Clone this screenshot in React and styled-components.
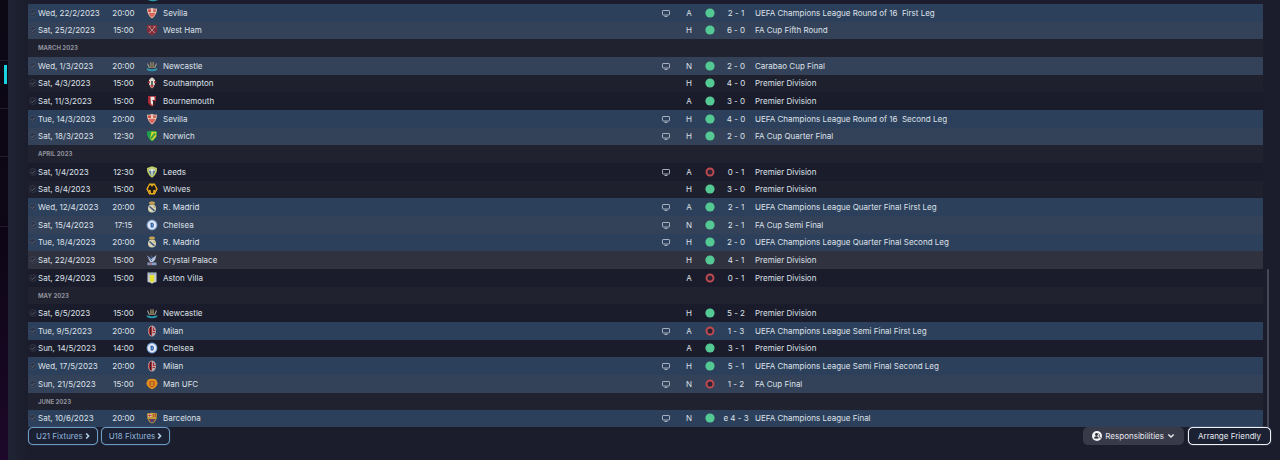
import React from "react";
import styled, { createGlobalStyle } from "styled-components";

const GlobalStyle = createGlobalStyle`
  *, *::before, *::after { box-sizing: border-box; }
  body {
    margin: 0;
    background: #1b1d2c;
    color: #dde1e9;
    font-family: Inter, "Liberation Sans", sans-serif;
    font-size: 8px;
    line-height: 12px;
  }
`;

const Page = styled.div`
  display: flex;
  min-height: 100vh;
`;

const Sidebar = styled.nav`
  flex: 0 0 8px;
  background: linear-gradient(#0c0814, #0e0616 55%, #1d0829);
`;

const SidebarItem = styled.div`
  height: ${(p) => p.$height}px;
  padding-top: 4px;
  border-bottom: 1px solid #241c2e;
`;

const ActiveMark = styled.div`
  width: 3px;
  height: 19px;
  margin-left: 4px;
  background: #19d3e2;
`;

const Panel = styled.main`
  flex: 1;
  min-width: 0;
  padding: 0 9px 15px 20px;
  background: linear-gradient(90deg, #1f2434, #1b1d2c 20px);
`;

const ScrollArea = styled.div`
  display: flex;
  justify-content: space-between;
`;

const Fixtures = styled.div`
  flex: 1;
  min-width: 0;
  margin-right: 4px;
`;

const PreviousRow = styled.div`
  display: flex;
  align-items: flex-end;
  height: 4px;
  padding: 0 0 2px 119px;
  overflow: hidden;
`;

const ScrollTrack = styled.div`
  display: flex;
  flex-direction: column;
  justify-content: flex-end;
  flex: 0 0 2px;
  margin-right: 2px;
`;

const ScrollThumb = styled.div`
  height: 37%;
  border-radius: 1px;
  background: #454757;
`;

const Table = styled.table`
  width: 100%;
  table-layout: fixed;
  border-collapse: collapse;
`;

const rowColors = {
  league: "#1b1c2b",
  leagueAlt: "#1f202e",
  month: "#20222f",
  europe: "#2d405b",
  cup: "#344259",
  hover: "#31323f",
};

const Row = styled.tr`
  height: 18px;
  background: ${(p) => rowColors[p.$tone]};
  &:nth-child(3n + 2), &:last-child { height: 17px; }
`;

const Cell = styled.td`
  padding: 0 0 1px;
  line-height: 12px;
  text-align: ${(p) => p.$align || "left"};
  vertical-align: middle;
  white-space: pre;
  svg { display: block; margin: 0 auto; }
`;

const CrestCell = styled(Cell)`
  padding-left: 4px;
`;

const MonthCell = styled.th`
  padding: 0 0 0 10px;
  color: #8f919b;
  font-size: 6px;
  font-weight: 700;
  line-height: 12px;
  text-align: left;
`;

const Footer = styled.footer`
  display: flex;
  justify-content: space-between;
`;

const ButtonGroup = styled.div`
  display: flex;
  gap: ${(p) => p.$gap}px;
`;

const Button = styled.button`
  display: flex;
  align-items: center;
  justify-content: center;
  gap: ${(p) => (p.$compact ? 2 : 3)}px;
  height: 18px;
  padding: 0 ${(p) => (p.$compact ? 7 : 8)}px 1px;
  border: 1px solid ${(p) => p.$border || "transparent"};
  border-radius: 5px;
  background: ${(p) => p.$fill || "#1b2133"};
  color: ${(p) => p.$color || "#e6e8ee"};
  font: inherit;
  white-space: nowrap;
  box-shadow: ${(p) => (p.$border ? `0 0 1px ${p.$border}` : "none")};
`;

const WideButton = styled(Button)`
  padding: 0 9px 1px;
`;

const crests = {
  Sevilla: (
    <>
      <path d="M1 1.500Q3.500 2 6 .8Q8.500 2 11 1.500Q11 8 6 11.500Q1 8 1 1.500Z" fill="#e3b9aa" />
      <path d="M2 2.500H5V5H2.300Z" fill="#cf4b45" />
      <path d="M7 2.500H10L9.700 5H7Z" fill="#c96a5c" />
      <path d="M2.700 6H9.300L8 8.800L6 10.500L4 8.800Z" fill="#d8655b" />
      <path d="M6 2.500V5" stroke="#f0ded8" />
    </>
  ),
  "West Ham": (
    <>
      <path d="M1 1H11V7.500Q9.500 10.500 6 11.500Q2.500 10.500 1 7.500Z" fill="#812f3d" />
      <path d="M3.200 3L8.800 9M8.800 3L3.200 9" stroke="#b98e84" strokeWidth="1" />
      <path d="M2.500 2.700H4.700M7.300 2.700H9.500" stroke="#bb7a74" strokeWidth="1.300" />
    </>
  ),
  Newcastle: (
    <>
      <path d="M1.500 3.500L3.500 8M10.500 3.500L8.500 8" stroke="#9a968a" strokeWidth="1.200" />
      <path d="M4.300 3.500H7.700V8H4.300Z" fill="#504c49" />
      <path d="M4.900 2V8M7.100 2V8" stroke="#b39d69" strokeWidth=".9" />
      <path d="M.5 8.300Q6 10.500 11.500 8.300L10.700 10.300Q6 12.300 1.300 10.300Z" fill="#2d9db2" />
    </>
  ),
  Southampton: (
    <>
      <path d="M3 2.500H9V7Q8 10 6 11.500Q4 10 3 7Z" fill="#e8e4df" />
      <circle cx="6" cy="2.500" r="2" fill="#dbd5c8" />
      <path d="M1 5L4 4V6.500ZM11 5L8 4V6.500ZM4 8L6 11.300L8 8Z" fill="#c23a3c" />
      <path d="M6 4V8" stroke="#47664f" strokeWidth="1.800" />
    </>
  ),
  Bournemouth: (
    <>
      <path d="M2 1H10V7.500Q9 10.500 6 11.500Q3 10.500 2 7.500Z" fill="#a92932" />
      <path d="M4.500 1.800H8.500V5H6L7.500 7L6.300 10.800L4.800 8Z" fill="#ece8e4" />
      <path d="M7 5.500L9.700 6V8.500L7.300 10.500Z" fill="#222127" />
    </>
  ),
  Norwich: (
    <>
      <path d="M1 1.500Q6 .2 11 1.500Q11.500 8 6 11.500Q.5 8 1 1.500Z" fill="#1f9f4b" />
      <path d="M5.500 1.800H10.200V6.500Q8 9.500 6 10.500L4 8Z" fill="#d0d22f" />
      <path d="M5 8.500L9 3.500" stroke="#2a9a4a" strokeWidth="1.900" />
    </>
  ),
  Leeds: (
    <>
      <path d="M1 2L6 .3L11 2Q11.500 8 6 11.700Q.5 8 1 2Z" fill="#c3cf63" />
      <path d="M2.700 3H9.300Q9.300 7.500 6 10Q2.700 7.500 2.700 3Z" fill="#567f93" />
      <path d="M3.200 4H8.800M6 3V9.300" stroke="#eef0e2" strokeWidth="1.300" />
    </>
  ),
  Wolves: (
    <>
      <path d="M3.200 .6H8.800L11.700 6L8.800 11.400H3.200L.3 6Z" fill="#eeb01e" />
      <path d="M3.900 2H8.100L10.200 6L8.100 10H3.900L1.800 6Z" fill="#1f1a17" />
      <path d="M4.500 2H7.500L6 4ZM2.200 6.500L4.700 7.200L5 9.900H3.900ZM9.800 6.500L7.300 7.200L7 9.900H8.100Z" fill="#eeb01e" />
    </>
  ),
  "R. Madrid": (
    <>
      <circle cx="6" cy="7.500" r="4" fill="#d9d5b4" />
      <path d="M3.500 3.500L3 1.300L6 .3L9 1.300L8.500 3.500Z" fill="#c3a052" />
      <path d="M3.500 5.500L8.500 9.800" stroke="#455a80" strokeWidth="1.600" />
      <path d="M7.500 5L9 7" stroke="#c5a24e" />
    </>
  ),
  Chelsea: (
    <>
      <circle cx="6" cy="6" r="5.400" fill="#7ea2d6" />
      <circle cx="6" cy="6" r="4.300" fill="#e3eaf5" />
      <path d="M4.400 3.700H7L7.900 5.500L7.300 8.500H4.800Z" fill="#2a59a4" />
      <path d="M6.200 4.700V7.200" stroke="#a7bfe2" strokeWidth=".8" />
    </>
  ),
  "Crystal Palace": (
    <>
      <path d="M1 1.500L5.500 5L10.500 1L9 6L7 8H4Z" fill="#b7c5dc" />
      <path d="M2.500 3L6 7M5.300 1.500L6.500 4" stroke="#4c72b2" />
      <path d="M1.500 8.500H10.500V11.200H1.500Z" fill="#86a0c9" />
      <path d="M3 10H6" stroke="#b54756" />
    </>
  ),
  "Aston Villa": (
    <>
      <path d="M1.500 .5H10.500V10Q8 10.300 6 11.700Q4 10.300 1.500 10Z" fill="#c3ccd2" />
      <path d="M3.800 3H8.200V9L6 10.500L3.800 9Z" fill="#e8df35" />
      <path d="M2.500 1.900H9.500" stroke="#8095a0" strokeWidth=".9" />
    </>
  ),
  Milan: (
    <>
      <ellipse cx="6" cy="6" rx="4" ry="5.600" fill="#b9a7aa" />
      <path d="M6 1Q2.600 2.500 2.600 6Q2.600 9.500 6 11Z" fill="#b12d35" />
      <path d="M4.500 2V10" stroke="#231d24" strokeWidth=".9" />
      <path d="M7.500 2.500V5.500H9.500M6.500 7.500H9" stroke="#b12d35" strokeWidth="1.200" fill="none" />
    </>
  ),
  "Man UFC": (
    <>
      <path d="M2 1.500Q6 0 10 1.500L11.700 5Q11 9.500 6 11.300Q1 9.500 .3 5Z" fill="#e2901f" />
      <path d="M3.500 3.300H8.500V7.500L6 9.500L3.500 7.500Z" fill="#a9441d" />
      <path d="M4.700 4.300H7.300V7.300L6 8.200L4.700 7.300Z" fill="#f1bb2d" />
      <path d="M6 4.800V7" stroke="#a9441d" strokeWidth=".9" />
    </>
  ),
  Barcelona: (
    <>
      <path d="M1 1.500L6 .8L11 1.500L10.500 7Q9.500 10 6 11.500Q2.500 10 1.500 7Z" fill="#c49a35" />
      <path d="M2 2H5.500V4.800H2Z" fill="#e8d5ce" />
      <path d="M3.700 2V4.800M2 3.400H5.500" stroke="#c13a41" strokeWidth=".9" />
      <path d="M7.500 2V5M9.500 2V5" stroke="#b3372f" strokeWidth=".8" />
      <path d="M2.500 7H9.500Q8.500 9.500 6 10.700Q3.500 9.500 2.500 7Z" fill="#37467d" />
      <path d="M4.500 7V9.500M7.500 7V9.500" stroke="#9c2947" />
    </>
  ),
};

const Crest = ({ club }) => (
  <svg width="12" height="12" viewBox="0 0 12 12" fill="none" aria-hidden="true">
    {crests[club]}
  </svg>
);

const CheckIcon = () => (
  <svg width="10" height="10" viewBox="0 0 10 10" fill="none" aria-hidden="true">
    <circle cx="5" cy="5" r="3.500" fill="#25293766" stroke="#7a839533" />
    <path d="M3.300 5.200L4.500 6.400L6.900 3.900" stroke="#98a0b077" />
  </svg>
);

const TvIcon = () => (
  <svg width="10" height="8" viewBox="0 0 10 8" fill="none" stroke="#b4bdca" role="img" aria-label="Televised">
    <rect x="1.500" y="1.500" width="7" height="4.500" rx=".6" strokeWidth=".9" />
    <path d="M3.500 7.400H6.500" strokeWidth="1" />
  </svg>
);

const ResultIcon = ({ lost }) => (
  <svg width="10" height="10" viewBox="0 0 10 10" role="img" aria-label={lost ? "Lost" : "Won"}>
    {lost ? (
      <circle cx="5" cy="5" r="3.500" fill="#2c2433" stroke="#c04a50" strokeWidth="1.900" />
    ) : (
      <circle cx="5" cy="5" r="4.600" fill="#55c993" />
    )}
  </svg>
);

const ChevronRight = () => (
  <svg width="5" height="8" viewBox="0 0 5 8" fill="none" aria-hidden="true">
    <path d="M1.200 1.500L3.600 4L1.200 6.500" stroke="#b4d0ec" strokeWidth="1.600" />
  </svg>
);

const ChevronDown = () => (
  <svg width="8" height="6" viewBox="0 0 8 6" fill="none" aria-hidden="true">
    <path d="M1.300 1.500L4 4L6.700 1.500" stroke="currentColor" strokeWidth="1.500" />
  </svg>
);

const StaffIcon = () => (
  <svg width="10" height="10" viewBox="0 0 10 10" aria-hidden="true">
    <circle cx="5" cy="5" r="5" fill="#f4f5f7" />
    <circle cx="4.500" cy="3.500" r="1.400" fill="#262733" />
    <path d="M2 7.500Q2.200 5.300 4.500 5.300Q6.500 5.300 6.800 7.500Z" fill="#262733" />
    <path d="M6.500 2.500Q8 3.500 7 5Q8.500 5.800 8.300 7.300" stroke="#262733" strokeWidth=".8" fill="none" />
  </svg>
);

const f = (tone, date, time, club, tv, venue, score, competition, lost = false) => ({
  tone, date, time, club, tv, venue, score, competition, lost,
});

const rows = [
  f("europe", "Wed, 22/2/2023", "20:00", "Sevilla", true, "A", "2 - 1", "UEFA Champions League Round of 16  First Leg"),
  f("cup", "Sat, 25/2/2023", "15:00", "West Ham", false, "H", "6 - 0", "FA Cup Fifth Round"),
  { month: "MARCH 2023" },
  f("cup", "Wed, 1/3/2023", "20:00", "Newcastle", true, "N", "2 - 0", "Carabao Cup Final"),
  f("leagueAlt", "Sat, 4/3/2023", "15:00", "Southampton", false, "H", "4 - 0", "Premier Division"),
  f("league", "Sat, 11/3/2023", "15:00", "Bournemouth", false, "A", "3 - 0", "Premier Division"),
  f("europe", "Tue, 14/3/2023", "20:00", "Sevilla", true, "H", "4 - 0", "UEFA Champions League Round of 16  Second Leg"),
  f("cup", "Sat, 18/3/2023", "12:30", "Norwich", true, "H", "2 - 0", "FA Cup Quarter Final"),
  { month: "APRIL 2023" },
  f("league", "Sat, 1/4/2023", "12:30", "Leeds", true, "A", "0 - 1", "Premier Division", true),
  f("leagueAlt", "Sat, 8/4/2023", "15:00", "Wolves", false, "H", "3 - 0", "Premier Division"),
  f("europe", "Wed, 12/4/2023", "20:00", "R. Madrid", true, "A", "2 - 1", "UEFA Champions League Quarter Final First Leg"),
  f("cup", "Sat, 15/4/2023", "17:15", "Chelsea", true, "N", "2 - 1", "FA Cup Semi Final"),
  f("europe", "Tue, 18/4/2023", "20:00", "R. Madrid", true, "H", "2 - 0", "UEFA Champions League Quarter Final Second Leg"),
  f("hover", "Sat, 22/4/2023", "15:00", "Crystal Palace", false, "H", "4 - 1", "Premier Division"),
  f("league", "Sat, 29/4/2023", "15:00", "Aston Villa", false, "A", "0 - 1", "Premier Division", true),
  { month: "MAY 2023" },
  f("league", "Sat, 6/5/2023", "15:00", "Newcastle", false, "H", "5 - 2", "Premier Division"),
  f("europe", "Tue, 9/5/2023", "20:00", "Milan", true, "A", "1 - 3", "UEFA Champions League Semi Final First Leg", true),
  f("league", "Sun, 14/5/2023", "14:00", "Chelsea", false, "A", "3 - 1", "Premier Division"),
  f("europe", "Wed, 17/5/2023", "20:00", "Milan", true, "H", "5 - 1", "UEFA Champions League Semi Final Second Leg"),
  f("cup", "Sun, 21/5/2023", "15:00", "Man UFC", true, "N", "1 - 2", "FA Cup Final", true),
  { month: "JUNE 2023" },
  f("europe", "Sat, 10/6/2023", "20:00", "Barcelona", true, "N", "e 4 - 3", "UEFA Champions League Final"),
];

const columnWidths = ["10px", "72px", "27px", "26px", "40%", "18px", "28px", "14px", "38px", "auto"];

const MonthRow = ({ month }) => (
  <Row $tone="month">
    <MonthCell colSpan={10} scope="colgroup">{month}</MonthCell>
  </Row>
);

const FixtureRow = ({ fixture }) => (
  <Row $tone={fixture.tone}>
    <Cell><CheckIcon /></Cell>
    <Cell>{fixture.date}</Cell>
    <Cell $align="center">{fixture.time}</Cell>
    <CrestCell><Crest club={fixture.club} /></CrestCell>
    <Cell>{fixture.club}</Cell>
    <Cell>{fixture.tv && <TvIcon />}</Cell>
    <Cell $align="center">{fixture.venue}</Cell>
    <Cell><ResultIcon lost={fixture.lost} /></Cell>
    <Cell $align="center">{fixture.score}</Cell>
    <Cell>{fixture.competition}</Cell>
  </Row>
);

export default function App() {
  return (
    <Page>
      <GlobalStyle />
      <Sidebar>
        <SidebarItem $height={61} />
        <SidebarItem $height={48}><ActiveMark /></SidebarItem>
        <SidebarItem $height={48} />
        <SidebarItem $height={70} />
      </Sidebar>
      <Panel>
        <ScrollArea>
          <Fixtures>
            <PreviousRow><Crest club="Newcastle" /></PreviousRow>
            <Table>
              <colgroup>
                {columnWidths.map((width, i) => <col key={i} style={{ width }} />)}
              </colgroup>
              <tbody>
                {rows.map((row) =>
                  row.month
                    ? <MonthRow key={row.month} month={row.month} />
                    : <FixtureRow key={row.date} fixture={row} />
                )}
              </tbody>
            </Table>
          </Fixtures>
          <ScrollTrack><ScrollThumb /></ScrollTrack>
        </ScrollArea>
        <Footer>
          <ButtonGroup $gap={3}>
            <Button $compact $border="#6c9bc4" $color="#8fb3d9">U21 Fixtures <ChevronRight /></Button>
            <Button $compact $border="#6c9bc4" $color="#8fb3d9">U18 Fixtures <ChevronRight /></Button>
          </ButtonGroup>
          <ButtonGroup $gap={4}>
            <Button $fill="#393a49"><StaffIcon />Responsibilities <ChevronDown /></Button>
            <WideButton $border="#eef1f6">Arrange Friendly</WideButton>
          </ButtonGroup>
        </Footer>
      </Panel>
    </Page>
  );
}
